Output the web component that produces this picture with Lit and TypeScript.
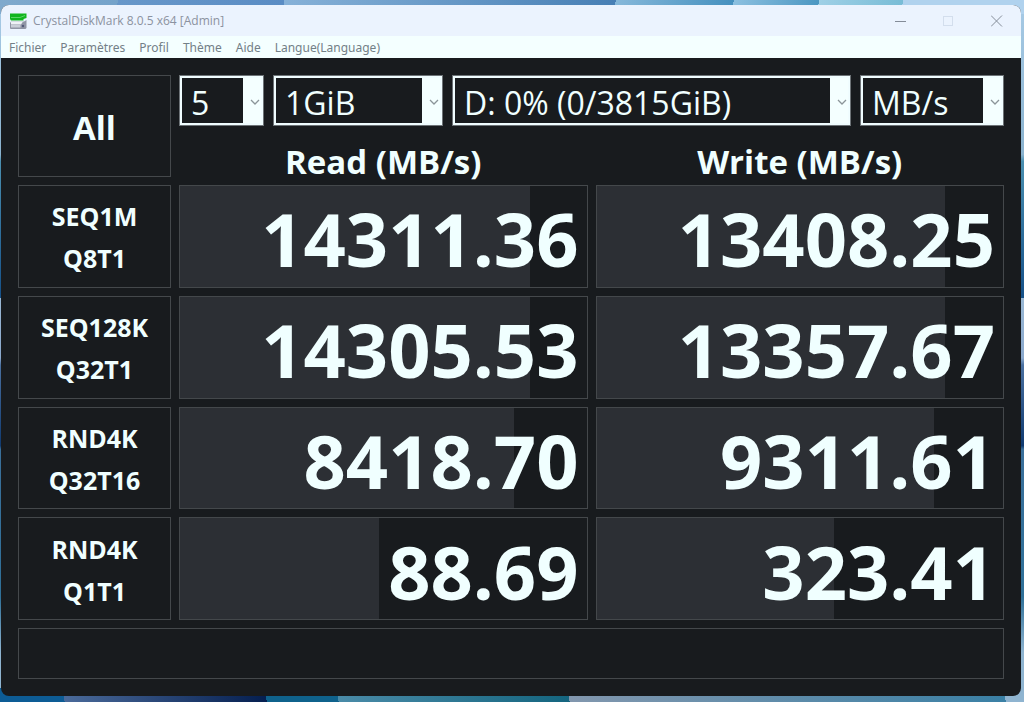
import { LitElement, html, css } from "lit";
import { customElement, state } from "lit/decorators.js";

interface Result {
  test: string;
  queue: string;
  read: string;
  write: string;
  readLevel: number;
  writeLevel: number;
}

const RESULTS: Result[] = [
  { test: "SEQ1M", queue: "Q8T1", read: "14311.36", write: "13408.25", readLevel: 86, writeLevel: 85.6 },
  { test: "SEQ128K", queue: "Q32T1", read: "14305.53", write: "13357.67", readLevel: 86, writeLevel: 85.6 },
  { test: "RND4K", queue: "Q32T16", read: "8418.70", write: "9311.61", readLevel: 82, writeLevel: 83 },
  { test: "RND4K", queue: "Q1T1", read: "88.69", write: "323.41", readLevel: 49, writeLevel: 58.3 },
];

const MENUS = ["Fichier", "Paramètres", "Profil", "Thème", "Aide", "Langue(Language)"];

@customElement("cdm-select")
class CdmSelect extends LitElement {
  static properties = { label: {}, options: { attribute: false } };
  declare label: string;
  declare options: string[];

  static styles = css`
    :host { display: grid; position: relative; min-width: 0; }
    .select {
      appearance: none;
      width: 100%;
      height: 51px;
      margin: 0;
      padding: 5px 20px 0 9px;
      border: 3px solid #f0fdff;
      border-radius: 0;
      outline: 1px solid #6d7377;
      outline-offset: -1px;
      background: linear-gradient(to left, #f4ffff 18px, #181b1e 18px);
      color: #f0ffff;
      font: 400 32px/40px "Open Sans", "Noto Sans", sans-serif;
    }
    .chevron {
      position: absolute;
      right: 4px;
      top: 23px;
      width: 10px;
      height: 8px;
      pointer-events: none;
    }
  `;

  render() {
    return html`
      <select class="select" aria-label=${this.label}>
        ${this.options.map((o) => html`<option>${o}</option>`)}
      </select>
      <svg class="chevron" viewBox="0 0 10 8" fill="none" stroke="#8b9599" stroke-width="1.3">
        <path d="M1 2 L5 6 L9 2" />
      </svg>
    `;
  }
}

@customElement("app-root")
class AppRoot extends LitElement {
  @state() private results = RESULTS;

  static styles = css`
    :host { display: block; font-family: "Open Sans", "Noto Sans", sans-serif; }
    * { box-sizing: border-box; }
    .desktop {
      display: flex;
      min-height: 100vh;
      padding: 5px 3px 6px 1px;
      background:
        linear-gradient(100deg, #7fa9cd 0, #74a3ca 11.5%, #6797c9 11.5%, #5a8cc4 27.7%, #86b1d8 27.7%, #477fb5 60%, #86b8da 60%, #4590bf 71.5%, #8cc0e0 71.5%, #4b97c2 79.8%, #9fd0e6 79.8%, #78bcd6 88%, #b0d2ee 88%) top / 100% 14px no-repeat,
        linear-gradient(80deg, #0d5c95 0 6.3%, #4a6a9a 6.3%, #051f50 26%, #0f628c 26% 33%, #4a8ba8 33%, #14657f 55.5%, #8297ae 55.5%, #3a80a5 98%, #8fb4d0 98%) bottom / 100% 14px no-repeat,
        linear-gradient(180deg, #a8cbe6 0, #8ab2ce 22%, #4a8fb0 23%, #155088 42.5%, #9ab8d4 42.5%, #8aa8cc 51%, #4a70a0 52%, #103a70 63.5%, #3a6f9a 64%, #2f7098 85%, #8fb4d0 93%);
    }
    .window {
      flex: 1;
      display: flex;
      flex-direction: column;
      min-width: 0;
      overflow: hidden;
      border-radius: 8px;
      background: #181b1e;
    }
    .titlebar {
      display: flex;
      align-items: center;
      height: 31px;
      padding-left: 8px;
      background: #ebf3fe;
      color: #8b92a0;
    }
    .logo { width: 18px; height: 18px; }
    .title { flex: 1; margin: 0; padding-left: 6px; font-size: 12px; line-height: 16px; font-weight: 400; }
    .caption { width: 48px; height: 31px; padding: 0; border: 0; background: none; display: grid; place-items: center; }
    .caption svg { width: 12px; height: 12px; fill: none; stroke: #848c98; }
    .caption:disabled svg { stroke: #d3deed; }
    .menubar { display: flex; height: 22px; background: #f4ffff; padding-left: 1px; }
    .menu { padding: 1px 7px 0; border: 0; background: none; color: #738087; font: 12px/20px "Noto Sans", sans-serif; }
    .content { flex: 1; display: flex; flex-direction: column; gap: 8px; padding: 17px; }
    .board {
      flex: 1;
      display: grid;
      grid-template-columns: 153px minmax(0, 1fr) minmax(0, 1fr);
      grid-template-rows: auto 43px repeat(4, minmax(102px, 1fr));
      gap: 8px;
      color: #f0ffff;
    }
    .group { display: contents; }
    .cell { display: grid; padding: 0; }
    .all { grid-row: span 2; }
    .options { grid-column: span 2; grid-template-columns: 85px 170px minmax(0, 1fr) 144px; gap: 9px; }
    .heading { padding-top: 11px; font-size: 33px; line-height: 34px; font-weight: 700; text-align: center; }
    .run {
      display: grid;
      align-content: center;
      padding: 2px 0 0;
      border: 1px solid #44484b;
      background: #181b1e;
      color: #f0ffff;
      font: 700 25px/42px "Open Sans", "Noto Sans", sans-serif;
    }
    .run-all { padding-top: 4px; font-size: 33px; }
    .score {
      align-items: center;
      padding: 6px 8px 0 0;
      border: 1px solid #44484b;
      background: linear-gradient(90deg, #2c2f34 var(--level), #181b1e var(--level));
      font-size: 74px;
      line-height: 94px;
      font-weight: 700;
      text-align: right;
    }
    .status { height: 51px; border: 1px solid #44484b; }
  `;

  render() {
    return html`
      <div class="desktop">
        <main class="window">
          <header class="titlebar">
            <svg class="logo" viewBox="0 0 18 18">
              <path d="M1 1.500h16.500v4.500l-3 1v1.500H2L1 7z" fill="#12b51f" />
              <path d="M2 5.500h9l5-2" stroke="#6fdc78" stroke-width=".8" fill="none" />
              <path d="M2 9.500h13l2.500-1.500v8l-1 1H1.500l-.5-1v-5z" fill="#9095a5" />
              <path d="M2 9.500h12l-2 3H2z" fill="#eef1f6" />
              <path d="M2 13h9.500v2.500H2z" fill="#c9ced8" />
              <circle cx="14" cy="14" r="1.200" fill="#535a78" />
            </svg>
            <h1 class="title">CrystalDiskMark 8.0.5 x64 [Admin]</h1>
            <button class="caption" aria-label="Réduire"><svg viewBox="0 0 12 12"><path d="M0 6.500h11" /></svg></button>
            <button class="caption" aria-label="Agrandir" disabled><svg viewBox="0 0 12 12"><rect x=".5" y="1.500" width="9" height="9" /></svg></button>
            <button class="caption" aria-label="Fermer"><svg viewBox="0 0 12 12"><path d="M0 .5l11 11M11 .5L0 11.500" /></svg></button>
          </header>
          <nav class="menubar">${MENUS.map((m) => html`<button class="menu">${m}</button>`)}</nav>
          <section class="content">
            <table class="board">
              <thead class="group">
                <tr class="group">
                  <th class="cell all" rowspan="2"><button class="run run-all">All</button></th>
                  <td class="cell options" colspan="2">
                    <cdm-select label="Nombre de tests" .options=${["5"]}></cdm-select>
                    <cdm-select label="Taille" .options=${["1GiB"]}></cdm-select>
                    <cdm-select label="Lecteur" .options=${["D: 0% (0/3815GiB)"]}></cdm-select>
                    <cdm-select label="Unité" .options=${["MB/s"]}></cdm-select>
                  </td>
                </tr>
                <tr class="group">
                  <th class="cell heading" scope="col">Read (MB/s)</th>
                  <th class="cell heading" scope="col">Write (MB/s)</th>
                </tr>
              </thead>
              <tbody class="group">
                ${this.results.map(
                  (r) => html`
                    <tr class="group">
                      <th class="cell" scope="row">
                        <button class="run"><span>${r.test}</span><span>${r.queue}</span></button>
                      </th>
                      <td class="cell score" style="--level:${r.readLevel}%">${r.read}</td>
                      <td class="cell score" style="--level:${r.writeLevel}%">${r.write}</td>
                    </tr>
                  `
                )}
              </tbody>
            </table>
            <div class="status" role="status"></div>
          </section>
        </main>
      </div>
    `;
  }
}
